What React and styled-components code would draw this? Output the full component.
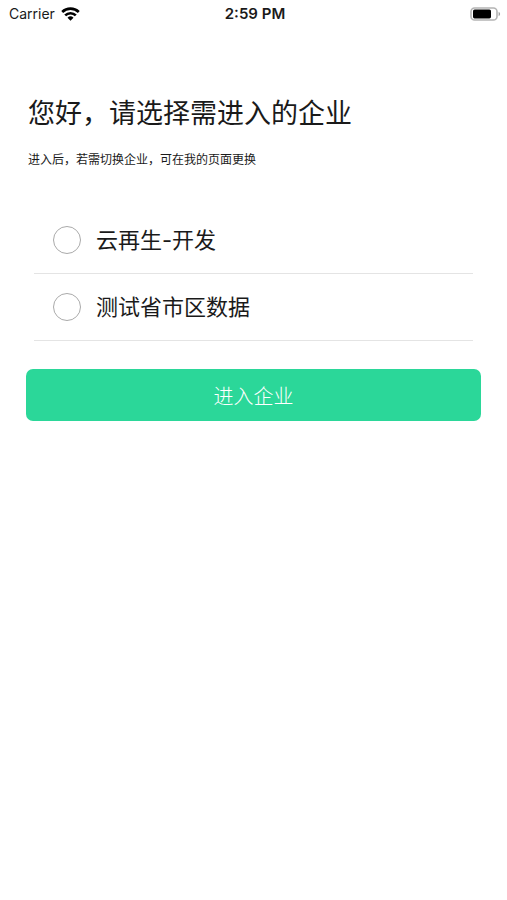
import React, { useState } from 'react';
// Styling
import styled, { createGlobalStyle } from 'styled-components';

const companies = [
  { id: 'dev', name: '云再生-开发' },
  { id: 'test', name: '测试省市区数据' },
];

function StatusBar() {
  return (
    <StatusWrapper>
      <div className="carrier">
        Carrier
        <svg width="19" height="14" viewBox="0 0 19 14" fill="none" stroke="#000" strokeWidth="2.7">
          <path d="M1.2 5a12 12 0 0 1 16.6 0" />
          <path d="M4.2 8.4a7.6 7.6 0 0 1 10.6 0" />
          <path d="M9.5 13.8L6.5 10.8a4.3 4.3 0 0 1 6 0z" fill="#000" stroke="none" />
        </svg>
      </div>
      <time>2:59 PM</time>
      <svg className="battery" width="31" height="14" viewBox="0 0 31 14">
        <rect x="1" y="1" width="26" height="12" rx="3.6" fill="none" stroke="#b4b4b4" strokeWidth="1.6" />
        <rect x="3" y="2.6" width="18" height="8.8" rx="1.6" fill="#000" />
        <path d="M28.6 4.8c2 .8 2 3.6 0 4.4z" fill="#a0a0a0" />
      </svg>
    </StatusWrapper>
  );
}

function App() {
  const [selected, setSelected] = useState('');

  return (
    <>
      <GlobalStyle />
      <StatusBar />
      <MainWrapper>
        <h1>您好，请选择需进入的企业</h1>
        <p>进入后，若需切换企业，可在我的页面更换</p>
        <CompanyList>
          {companies.map( company => (
            <CompanyRow key={company.id}>
              <input
                type="radio"
                name="company"
                value={company.id}
                checked={selected === company.id}
                onChange={() => setSelected(company.id)}
              />
              {company.name}
            </CompanyRow>
          ))}
        </CompanyList>
        <EnterButton type="button">进入企业</EnterButton>
      </MainWrapper>
    </>
  );
}

// Styled Components
const GlobalStyle = createGlobalStyle`
  *{
    box-sizing: border-box;
  }

  body{
    margin: 0;
    background-color: #fff;
    color: #1a1a1a;
    font-family: Inter, 'Noto Sans CJK SC', sans-serif;
  }
`;

const StatusWrapper = styled.header`
  display: grid;
  grid-template-columns: 1fr auto 1fr;
  align-items: center;
  height: 27px;
  padding: 0 6px 0 9px;
  color: #1a1a1a;
  font-size: 14px;

  .carrier{
    display: flex;
    align-items: center;
    gap: 6px;
  }

  time{
    font-size: 15px;
    font-weight: 600;
  }

  .battery{
    justify-self: end;
  }
`;

const MainWrapper = styled.main`
  padding: 65px 26px 0;

  h1{
    margin: 0 2px;
    font-family: 'Noto Sans CJK SC', sans-serif;
    font-size: 27px;
    line-height: 40px;
    font-weight: 400;
  }

  p{
    margin: 18px 2px 0;
    font-family: 'Noto Sans CJK SC', sans-serif;
    font-size: 12px;
    line-height: 18px;
  }
`;

const CompanyList = styled.fieldset`
  margin: 39px 8px 0;
  padding: 0;
  border: 0;
`;

const CompanyRow = styled.label`
  display: flex;
  align-items: center;
  gap: 15px;
  height: 67px;
  padding-left: 19px;
  border-bottom: 1px solid #e4e4e4;
  font-size: 22px;
  line-height: 32px;
  cursor: pointer;

  input{
    appearance: none;
    width: 28px;
    height: 28px;
    margin: 0;
    border: 1px solid #aaa;
    border-radius: 50%;

    &:checked{
      border: 8px solid #2bd799;
    }
  }
`;

const EnterButton = styled.button`
  display: block;
  width: 100%;
  height: 52px;
  margin-top: 28px;
  border: 0;
  border-radius: 7px;
  background-color: #2bd799;
  color: #fff;
  font-family: 'Noto Sans CJK SC', sans-serif;
  font-size: 20px;
  font-weight: 300;
  cursor: pointer;
`;

export default App;
